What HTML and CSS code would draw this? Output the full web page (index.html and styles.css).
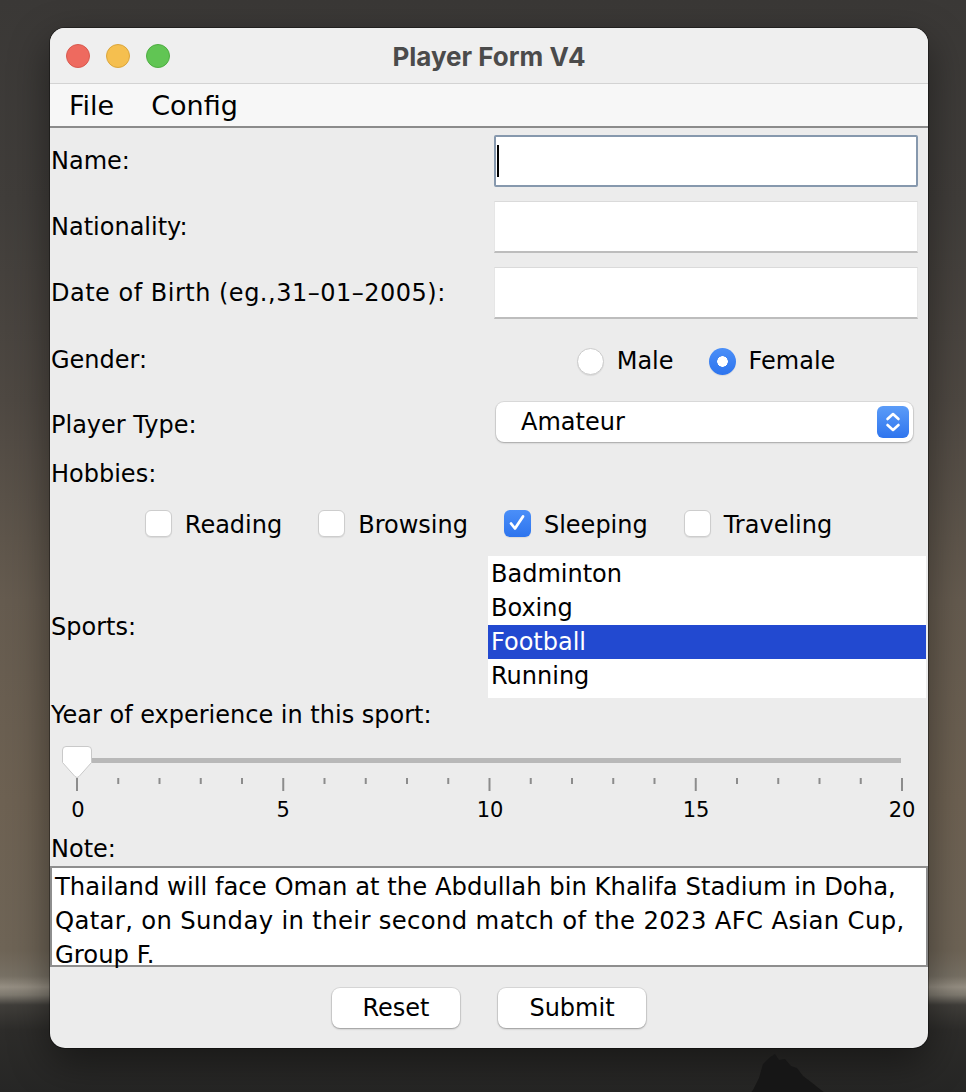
FILE: index.html
```html
<!DOCTYPE html>
<html>
<head>
<meta charset="utf-8">
<link rel="stylesheet" href="styles.css">
</head>
<body>
<div class="desktop">
  <div class="window">
    <div class="titlebar">
      <div class="lights">
        <span class="light red"></span>
        <span class="light yellow"></span>
        <span class="light green"></span>
      </div>
      <div class="title">Player Form V4</div>
      <div></div>
    </div>
    <div class="menubar">
      <span class="menu">File</span>
      <span class="menu">Config</span>
    </div>
    <div class="content">
      <div class="row row-first">
        <div class="label">Name:</div>
        <div class="field focus"><span class="caret"></span></div>
      </div>
      <div class="row row-next">
        <div class="label">Nationality:</div>
        <div class="field"></div>
      </div>
      <div class="row row-next">
        <div class="label label-dob">Date of Birth (eg.,31–01–2005):</div>
        <div class="field"></div>
      </div>
      <div class="row row-gender">
        <div class="label">Gender:</div>
        <div class="radios">
          <div class="opt"><span class="radio"></span><span>Male</span></div>
          <div class="opt"><span class="radio on"></span><span>Female</span></div>
        </div>
      </div>
      <div class="row row-type">
        <div class="label label-type">Player Type:</div>
        <div class="combo">
          <span class="combo-text">Amateur</span>
          <span class="stepper">
            <svg width="32" height="32" viewBox="0 0 32 32"><path d="M10.5 13 L16 8 L21.5 13 M10.5 19 L16 24 L21.5 19" fill="none" stroke="#fff" stroke-width="2.6" stroke-linecap="round" stroke-linejoin="round"/></svg>
          </span>
        </div>
      </div>
      <div class="row row-hobbies">
        <div class="label">Hobbies:</div>
      </div>
      <div class="checks">
        <div class="opt"><span class="box"></span><span>Reading</span></div>
        <div class="opt"><span class="box"></span><span>Browsing</span></div>
        <div class="opt"><span class="box on"><svg width="26" height="26" viewBox="0 0 26 26"><path d="M7 13.5 L11 18.5 L19 6.5" fill="none" stroke="#fff" stroke-width="2.8" stroke-linecap="round" stroke-linejoin="round"/></svg></span><span>Sleeping</span></div>
        <div class="opt"><span class="box"></span><span>Traveling</span></div>
      </div>
      <div class="row row-sports">
        <div class="label label-sports">Sports:</div>
        <div class="list">
          <div class="item">Badminton</div>
          <div class="item">Boxing</div>
          <div class="item selected">Football</div>
          <div class="item">Running</div>
        </div>
      </div>
      <div class="line-label year">Year of experience in this sport:</div>
      <div class="slider">
        <svg width="878" height="94" viewBox="0 0 878 94">
          <rect x="28" y="26" width="823" height="5" fill="#b8b8b8"/>
          <g stroke="#8c8c8c" stroke-width="2">
            <line x1="27" y1="46" x2="27" y2="59"/>
            <line x1="68.25" y1="46" x2="68.25" y2="52"/>
            <line x1="109.5" y1="46" x2="109.5" y2="52"/>
            <line x1="150.75" y1="46" x2="150.75" y2="52"/>
            <line x1="192" y1="46" x2="192" y2="52"/>
            <line x1="233.25" y1="46" x2="233.25" y2="59"/>
            <line x1="274.5" y1="46" x2="274.5" y2="52"/>
            <line x1="315.75" y1="46" x2="315.75" y2="52"/>
            <line x1="357" y1="46" x2="357" y2="52"/>
            <line x1="398.25" y1="46" x2="398.25" y2="52"/>
            <line x1="439.5" y1="46" x2="439.5" y2="59"/>
            <line x1="480.75" y1="46" x2="480.75" y2="52"/>
            <line x1="522" y1="46" x2="522" y2="52"/>
            <line x1="563.25" y1="46" x2="563.25" y2="52"/>
            <line x1="604.5" y1="46" x2="604.5" y2="52"/>
            <line x1="645.75" y1="46" x2="645.75" y2="59"/>
            <line x1="687" y1="46" x2="687" y2="52"/>
            <line x1="728.25" y1="46" x2="728.25" y2="52"/>
            <line x1="769.5" y1="46" x2="769.5" y2="52"/>
            <line x1="810.75" y1="46" x2="810.75" y2="52"/>
            <line x1="852" y1="46" x2="852" y2="59"/>
          </g>
          <g class="ticklabels" text-anchor="middle">
            <text x="28" y="85">0</text>
            <text x="233.25" y="85">5</text>
            <text x="440" y="85">10</text>
            <text x="646" y="85">15</text>
            <text x="852" y="85">20</text>
          </g>
          <path d="M16 14.5 H38 Q41.5 14.5 41.5 18 V30.5 L29 44.5 Q27 46.5 25 44.5 L12.5 30.5 V18 Q12.5 14.5 16 14.5 Z" fill="#fff" stroke="#c9c9c9" stroke-width="1"/>
        </svg>
      </div>
      <div class="line-label note">Note:</div>
      <div class="textarea">
        <div>Thailand will face Oman at the Abdullah bin Khalifa Stadium in Doha,</div>
        <div class="line2">Qatar, on Sunday in their second match of the 2023 AFC Asian Cup,</div>
        <div>Group F.</div>
      </div>
      <div class="buttons">
        <button class="btn btn-reset">Reset</button>
        <button class="btn btn-submit">Submit</button>
      </div>
    </div>
  </div>
  <svg class="rock" width="90" height="50" viewBox="0 0 90 50"><path d="M0 50 L8 40 L14 28 L18 14 L24 8 L30 4 L34 10 L40 9 L46 16 L52 18 L58 26 L66 32 L76 40 L90 50 Z" fill="#161616"/></svg>
</div>
</body>
</html>
```
FILE: styles.css
```css
html, body {
  margin: 0;
  padding: 0;
}
body {
  width: 966px;
  height: 1092px;
  overflow: hidden;
  font-family: "DejaVu Sans", "Lucida Grande", sans-serif;
  color: #000;
}
.desktop {
  position: relative;
  width: 966px;
  height: 1092px;
  overflow: hidden;
  background: linear-gradient(180deg,
    #3a3836 0px,
    #403d3a 200px,
    #4e4842 400px,
    #655b4f 600px,
    #6d6152 800px,
    #6e6456 950px,
    #777064 976px,
    #958e82 987px,
    #7e796f 995px,
    #403e3a 1005px,
    #2d2c2a 1030px,
    #262625 1092px);
  padding-top: 28px;
  box-sizing: border-box;
}
.window {
  margin-left: 50px;
  width: 878px;
  height: 1020px;
  border-radius: 15px;
  overflow: hidden;
  background: #ececec;
  box-shadow: 0 0 0 1px rgba(0,0,0,0.35), 0 14px 40px rgba(0,0,0,0.45);
}
.titlebar {
  height: 55px;
  border-bottom: 1px solid #d3d3d3;
  background: #efefef;
  display: grid;
  grid-template-columns: 1fr auto 1fr;
  align-items: center;
}
.lights {
  display: flex;
  gap: 16px;
  padding-left: 16px;
  padding-top: 1px;
}
.light {
  width: 24px;
  height: 24px;
  border-radius: 50%;
  box-sizing: border-box;
}
.red { background: #ee6a5f; border: 1px solid #d85a4f; }
.yellow { background: #f5bf4f; border: 1px solid #dba63c; }
.green { background: #61c554; border: 1px solid #4ead42; }
.title {
  font-family: "Inter", "DejaVu Sans", sans-serif;
  font-weight: 700;
  font-size: 26px;
  color: #4b4b4b;
  padding-top: 1px;
}
.menubar {
  height: 42px;
  border-bottom: 2px solid #8b8b8b;
  background: #f7f7f7;
  display: flex;
  align-items: center;
  gap: 37px;
  padding-left: 19px;
  font-size: 27px;
}
.content {
  display: flex;
  flex-direction: column;
  font-size: 24px;
}
.row {
  display: flex;
  align-items: center;
}
.label {
  width: 444px;
  padding-left: 1px;
  box-sizing: border-box;
  white-space: nowrap;
}
.label-dob { letter-spacing: 0.5px; }
.row-first { margin-top: 7px; height: 52px; }
.row-next { margin-top: 14px; height: 52px; }
.field {
  width: 424px;
  height: 52px;
  box-sizing: border-box;
  background: #fff;
  border-top: 1px solid #dadada;
  border-left: 1px solid #e6e6e6;
  border-right: 1px solid #e6e6e6;
  border-bottom: 2px solid #bdbdbd;
  display: flex;
  align-items: center;
}
.field.focus {
  border: 2px solid #8698ad;
  border-radius: 2px;
}
.caret {
  width: 2px;
  height: 32px;
  background: #000;
  margin-left: 1px;
}
.row-gender { margin-top: 15px; height: 52px; }
.radios {
  width: 424px;
  display: flex;
  justify-content: center;
  gap: 35px;
  padding-top: 2px;
}
.opt {
  display: flex;
  align-items: center;
  gap: 13px;
}
.radio {
  width: 27px;
  height: 27px;
  border-radius: 50%;
  box-sizing: border-box;
  background: #fff;
  border: 1px solid #cbcbcb;
  box-shadow: 0 1px 1px rgba(0,0,0,0.08);
}
.radio.on {
  border: none;
  background: radial-gradient(circle, #fff 0 5px, transparent 5.5px), linear-gradient(180deg, #4b8ff8, #2d74ee);
}
.row-type { margin-top: 16px; height: 40px; }
.label-type { padding-top: 6px; }
.combo {
  margin-left: 2px;
  width: 417px;
  height: 40px;
  box-sizing: border-box;
  background: #fff;
  border-radius: 8px;
  box-shadow: 0 0 0 1px rgba(0,0,0,0.07), 0 1px 2px rgba(0,0,0,0.25);
  display: flex;
  align-items: center;
  justify-content: space-between;
  padding-left: 25px;
  padding-right: 4px;
}
.stepper {
  width: 32px;
  height: 32px;
  border-radius: 6px;
  background: linear-gradient(180deg, #5b9cf8, #2f75ee);
  display: flex;
}
.row-hobbies { margin-top: 18px; height: 28px; }
.checks {
  margin-top: 17px;
  height: 36px;
  display: flex;
  justify-content: center;
  align-items: center;
  gap: 36px;
  padding-right: 1px;
}
.checks .opt span:last-child { padding-top: 3px; }
.box {
  width: 27px;
  height: 27px;
  box-sizing: border-box;
  border-radius: 6px;
  background: #fff;
  border: 1px solid #cdcdcd;
  box-shadow: 0 1px 1px rgba(0,0,0,0.08);
  display: flex;
}
.box.on {
  border: none;
  background: linear-gradient(180deg, #4b8ff8, #2d74ee);
  align-items: center;
  justify-content: center;
}
.row-sports { margin-top: 15px; height: 142px; }
.label-sports { width: 438px; }
.list {
  width: 438px;
  height: 142px;
  background: #fff;
  padding-top: 1px;
  box-sizing: border-box;
}
.item {
  height: 34px;
  line-height: 34px;
  padding-left: 3px;
}
.item.selected {
  background: #2249d0;
  color: #fff;
}
.line-label {
  padding-left: 1px;
  line-height: 34px;
}
.year { height: 34px; }
.slider { height: 94px; }
.slider svg { display: block; }
.ticklabels {
  font-family: "DejaVu Sans", sans-serif;
  font-size: 21px;
  fill: #000;
}
.note {
  height: 40px;
  box-sizing: border-box;
  padding-top: 8px;
  line-height: 30px;
}
.textarea {
  height: 101px;
  box-sizing: border-box;
  border: 2px solid #8e8e8e;
  background: #fff;
  padding: 2px 0 0 3px;
  line-height: 34px;
  white-space: nowrap;
  font-size: 24.3px;
}
.textarea .line2 { letter-spacing: 0.35px; }
.buttons {
  display: flex;
  justify-content: center;
  gap: 38px;
  padding-top: 21px;
}
.btn {
  height: 40px;
  border: none;
  border-radius: 8px;
  background: #fff;
  box-shadow: 0 0 0 1px rgba(0,0,0,0.08), 0 1px 2px rgba(0,0,0,0.3);
  font-family: "DejaVu Sans", sans-serif;
  font-size: 24px;
  color: #000;
  padding: 0;
}
.btn-reset { width: 128px; }
.btn-submit { width: 148px; }
.rock {
  position: absolute;
  left: 745px;
  top: 1050px;
}
```
